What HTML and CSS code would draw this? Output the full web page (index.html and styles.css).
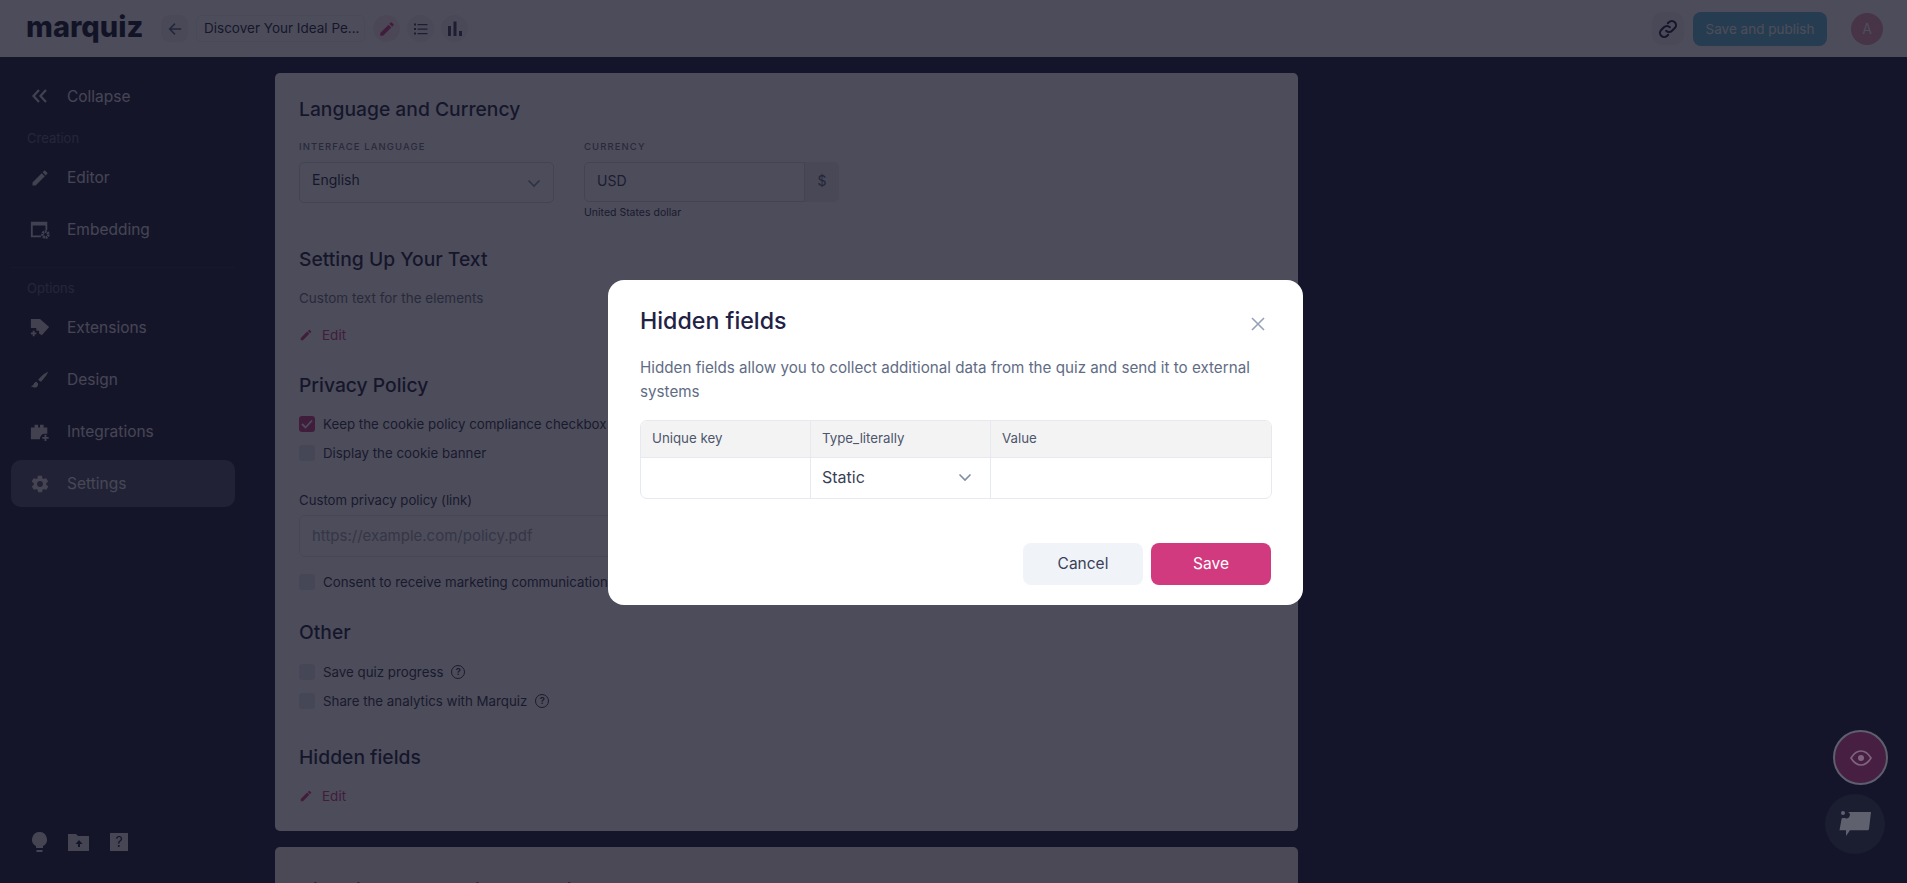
FILE: index.html
```html
<!DOCTYPE html>
<html lang="en">
<head>
    <meta charset="UTF-8">
    <title>Marquiz</title>
    <link rel="stylesheet" href="styles.css">
</head>
<body>
    <header class="topbar">
        <div class="logo">marquiz</div>
        <button class="back-btn">
            <svg width="16" height="16" viewBox="0 0 18 18"><path d="M16 9H3M9 3 3 9l6 6" fill="none" stroke="#5a6078" stroke-width="1.800"/></svg>
        </button>
        <div class="quiz-name">Discover Your Ideal Pe...</div>
        <div class="tab tab-active">
            <svg width="18" height="18" viewBox="0 0 24 24"><path d="M3 17.250V21h3.750L17.800 9.940l-3.750-3.750L3 17.250zM20.700 7.040a1 1 0 0 0 0-1.410l-2.340-2.340a1 1 0 0 0-1.410 0l-1.830 1.830 3.750 3.750 1.830-1.830z" fill="#d23a80"/></svg>
        </div>
        <div class="tab">
            <svg width="16" height="16" viewBox="0 0 16 16"><path d="M1 2.500h2v2H1zM1 7h2v2H1zM1 11.500h2v2H1zM4.500 3h10v1.200h-10zM4.500 7.500h10v1.200h-10zM4.500 12h10v1.200h-10z" fill="#3a3e58"/></svg>
        </div>
        <div class="tab">
            <svg width="16" height="16" viewBox="0 0 16 16"><path d="M1 5h3v10H1zM6.500 0.500h3V15h-3zM12 10h3v5h-3z" fill="#3a3e58"/></svg>
        </div>
        <div class="topbar-right">
            <div class="link-btn">
                <svg width="22" height="22" viewBox="0 0 24 24" fill="none" stroke="#1c1f3a" stroke-width="2.300" stroke-linecap="round"><path d="M10 14a4.500 4.500 0 0 0 6.400 0l3-3a4.500 4.500 0 0 0-6.400-6.400l-1.200 1.200"/><path d="M14 10a4.500 4.500 0 0 0-6.400 0l-3 3a4.500 4.500 0 0 0 6.400 6.400l1.200-1.200"/></svg>
            </div>
            <button class="publish-btn">Save and publish</button>
            <div class="avatar">A</div>
        </div>
    </header>

    <div class="main">
        <aside class="sidebar">
            <div class="nav-item collapse-item">
                <svg class="nav-icon" width="20" height="20" viewBox="0 0 20 20" fill="none" stroke="#fff" stroke-width="2.200"><path d="M9 4 3.500 10 9 16M16 4l-5.500 6 5.500 6"/></svg>
                <span>Collapse</span>
            </div>
            <div class="nav-title">Creation</div>
            <div class="nav-item">
                <svg class="nav-icon" width="20" height="20" viewBox="0 0 24 24"><path d="M3 17.250V21h3.750L17.800 9.940l-3.750-3.750L3 17.250zM20.700 7.040a1 1 0 0 0 0-1.410l-2.340-2.340a1 1 0 0 0-1.410 0l-1.830 1.830 3.750 3.750 1.830-1.830z" fill="#fff"/></svg>
                <span>Editor</span>
            </div>
            <div class="nav-item">
                <svg class="nav-icon" width="20" height="20" viewBox="0 0 22 22"><path d="M1 2h18v9h-2V6H3v11h9v2H1z" fill="#fff"/><circle cx="17" cy="16" r="3.200" fill="none" stroke="#fff" stroke-width="3" stroke-dasharray="2 .8"/></svg>
                <span>Embedding</span>
            </div>
            <div class="nav-divider"></div>
            <div class="nav-title">Options</div>
            <div class="nav-item">
                <svg class="nav-icon" width="20" height="20" viewBox="0 0 22 22"><path d="M1 1h10l10 9-8 9-3-2v-3H7v-3H1z" fill="#fff"/><path d="M4 14v6M1 17h6" stroke="#fff" stroke-width="2"/></svg>
                <span>Extensions</span>
            </div>
            <div class="nav-item">
                <svg class="nav-icon" width="20" height="20" viewBox="0 0 22 22"><path d="M20 2c-3 1-8 5-11 9l3 2c3-3 7-8 8-11zM7 13c-3 0-2 4-6 5 3 2 8 2 8-3z" fill="#fff"/></svg>
                <span>Design</span>
            </div>
            <div class="nav-item">
                <svg class="nav-icon" width="20" height="20" viewBox="0 0 22 22"><path d="M1 6h4V3h4v3h2V3h4v3h4v7h-3a5 5 0 0 0-5 5v1H1z" fill="#fff"/><path d="M17 14v7M13.500 17.500h7" stroke="#fff" stroke-width="2"/></svg>
                <span>Integrations</span>
            </div>
            <div class="nav-item nav-active">
                <svg class="nav-icon" width="20" height="20" viewBox="0 0 24 24"><path d="M19.400 13c.1-.3.100-.7.100-1s0-.7-.1-1l2.100-1.600c.2-.2.200-.4.100-.6l-2-3.500c-.1-.2-.4-.3-.6-.2l-2.500 1c-.5-.4-1.100-.7-1.700-1l-.4-2.700c0-.2-.2-.4-.5-.4h-4c-.3 0-.5.200-.5.400l-.4 2.700c-.6.300-1.200.6-1.700 1l-2.500-1c-.2-.1-.5 0-.6.200l-2 3.500c-.1.200-.1.400.1.600L4.600 11c-.1.300-.1.700-.1 1s0 .7.1 1l-2.100 1.600c-.2.200-.2.400-.1.600l2 3.500c.1.200.4.300.6.200l2.500-1c.5.400 1.100.7 1.700 1l.4 2.700c0 .2.200.4.500.4h4c.3 0 .5-.2.500-.4l.4-2.700c.6-.3 1.200-.6 1.700-1l2.500 1c.2.100.5 0 .6-.2l2-3.500c.1-.2.100-.4-.1-.6L19.400 13zM12 15.500a3.500 3.500 0 1 1 0-7 3.500 3.500 0 0 1 0 7z" fill="#fff"/></svg>
                <span>Settings</span>
            </div>
            <div class="sidebar-bottom">
                <svg width="15" height="20" viewBox="0 0 15 20"><path d="M7.500 0A7.500 7.500 0 0 0 4 14.100V16h7v-1.900A7.500 7.500 0 0 0 7.500 0zM4.500 18h6v2h-6z" fill="#fff"/></svg>
                <svg width="21" height="17" viewBox="0 0 21 17"><path d="M0 0h8l2 2h11v15H0zM11 6l-3.500 4H10v3h2v-3h2.500z" fill="#fff" fill-rule="evenodd"/></svg>
                <div class="help-box">?</div>
            </div>
        </aside>

        <div class="content">
            <section class="card">
                <h2 class="card-title">Language and Currency</h2>
                <div class="lang-row">
                    <div class="lang-col">
                        <div class="caps-label">INTERFACE LANGUAGE</div>
                        <div class="select-box">
                            <span>English</span>
                            <svg width="14" height="9" viewBox="0 0 14 9" fill="none" stroke="#7f8ea3" stroke-width="1.600"><path d="m1.500 1.500 5.500 5.500 5.500-5.500"/></svg>
                        </div>
                    </div>
                    <div class="lang-col">
                        <div class="caps-label">CURRENCY</div>
                        <div class="currency-box">
                            <div class="currency-input">USD</div>
                            <div class="currency-sign">$</div>
                        </div>
                        <div class="currency-hint">United States dollar</div>
                    </div>
                </div>

                <h2 class="card-title title-text">Setting Up Your Text</h2>
                <p class="muted">Custom text for the elements</p>
                <div class="edit-link">
                    <svg width="14" height="14" viewBox="0 0 24 24"><path d="M3 17.250V21h3.750L17.800 9.940l-3.750-3.750L3 17.250zM20.700 7.040a1 1 0 0 0 0-1.410l-2.340-2.340a1 1 0 0 0-1.410 0l-1.830 1.830 3.750 3.750 1.830-1.830z" fill="#d23a80"/></svg>
                    <span>Edit</span>
                </div>

                <h2 class="card-title title-privacy">Privacy Policy</h2>
                <label class="check-row">
                    <span class="check check-on"><svg width="12" height="10" viewBox="0 0 12 10" fill="none" stroke="#fff" stroke-width="1.800"><path d="m1 5 3.500 3.500L11 1.500"/></svg></span>
                    Keep the cookie policy compliance checkbox
                </label>
                <label class="check-row">
                    <span class="check"></span>
                    Display the cookie banner
                </label>
                <div class="field-label">Custom privacy policy (link)</div>
                <div class="text-field">https://example.com/policy.pdf</div>
                <label class="check-row consent-row">
                    <span class="check"></span>
                    Consent to receive marketing communications
                </label>

                <h2 class="card-title title-other">Other</h2>
                <label class="check-row">
                    <span class="check"></span>
                    Save quiz progress
                    <span class="hint-icon">?</span>
                </label>
                <label class="check-row">
                    <span class="check"></span>
                    Share the analytics with Marquiz
                    <span class="hint-icon">?</span>
                </label>

                <h2 class="card-title title-hidden">Hidden fields</h2>
                <div class="edit-link edit-hidden">
                    <svg width="14" height="14" viewBox="0 0 24 24"><path d="M3 17.250V21h3.750L17.800 9.940l-3.750-3.750L3 17.250zM20.700 7.040a1 1 0 0 0 0-1.410l-2.340-2.340a1 1 0 0 0-1.410 0l-1.830 1.830 3.750 3.750 1.830-1.830z" fill="#d23a80"/></svg>
                    <span>Edit</span>
                </div>
            </section>
            <section class="card card-next">
                <h2 class="card-title danger-title">Disabling and deleting the quiz data</h2>
            </section>
        </div>
    </div>

    <div class="overlay"></div>

    <div class="float-btns">
        <div class="eye-btn">
            <svg width="24" height="18" viewBox="0 0 24 18" fill="none" stroke="#fff" stroke-width="1.600"><path d="M2 9c3-5 6.500-7 10-7s7 2 10 7c-3 5-6.500 7-10 7S5 14 2 9z"/><circle cx="12" cy="9" r="3" fill="#fff" stroke="none"/></svg>
        </div>
        <div class="chat-btn">
            <svg width="33" height="28" viewBox="0 0 33 28"><circle cx="4" cy="3" r="2" fill="#fff"/><path d="M9 2h23l-2 17a1.500 1.500 0 0 1-1.500 1.300H11L7 26v-5.700H.5l2-11a1.500 1.500 0 0 1 1.500-1.300h2a3 3 0 0 0 3-6z" fill="#fff"/></svg>
        </div>
    </div>

    <div class="modal">
        <div class="modal-head">
            <h3 class="modal-title">Hidden fields</h3>
            <svg class="modal-close" width="16" height="16" viewBox="0 0 16 16" fill="none" stroke="#93a3b5" stroke-width="1.600"><path d="m2 2 12 12M14 2 2 14"/></svg>
        </div>
        <p class="modal-text">Hidden fields allow you to collect additional data from the quiz and send it to external systems</p>
        <div class="fields-table">
            <div class="fields-row fields-head">
                <div class="cell">Unique key</div>
                <div class="cell">Type_literally</div>
                <div class="cell">Value</div>
            </div>
            <div class="fields-row fields-body">
                <div class="cell"></div>
                <div class="cell type-cell">
                    <span>Static</span>
                    <svg width="14" height="9" viewBox="0 0 14 9" fill="none" stroke="#7f8ea3" stroke-width="1.600"><path d="m1.500 1.500 5.500 5.500 5.500-5.500"/></svg>
                </div>
                <div class="cell"></div>
            </div>
        </div>
        <div class="modal-actions">
            <button class="btn-cancel">Cancel</button>
            <button class="btn-save">Save</button>
        </div>
    </div>
</body>
</html>
```
FILE: styles.css
```css
* {
    box-sizing: border-box;
}
body {
    margin: 0;
    height: 883px;
    overflow: hidden;
    background: #181a36;
    font-family: Inter, "Liberation Sans", sans-serif;
    color: #1c1f3a;
    font-size: 14px;
}
button {
    font-family: inherit;
    border: none;
}

/* top bar */
.topbar {
    height: 57px;
    background: #fff;
    display: flex;
    align-items: center;
    padding-left: 26px;
}
.logo {
    font-weight: 800;
    font-size: 29px;
    width: 135px;
    margin-top: -4px;
    color: #12142a;
}
.back-btn {
    width: 27px;
    height: 27px;
    border-radius: 8px;
    background: #f1f3f7;
    display: flex;
    align-items: center;
    justify-content: center;
    padding: 0;
    margin-right: 8px;
}
.quiz-name {
    width: 169px;
    height: 27px;
    line-height: 25px;
    padding-left: 7px;
    border: 1px solid #f1f3f7;
    border-radius: 5px;
    font-size: 13.500px;
    white-space: nowrap;
    margin-right: 8px;
}
.tab {
    width: 27px;
    height: 27px;
    border-radius: 50%;
    background: #f1f3f7;
    display: flex;
    align-items: center;
    justify-content: center;
    margin-right: 7px;
}
.tab-active {
    background: #fbe9f1;
}
.topbar-right {
    margin-left: auto;
    display: flex;
    align-items: center;
    padding-right: 24px;
}
.link-btn {
    width: 32px;
    height: 33px;
    border-radius: 10px;
    background: #f1f3f7;
    display: flex;
    align-items: center;
    justify-content: center;
    margin-right: 9px;
}
.publish-btn {
    width: 134px;
    height: 34px;
    border-radius: 8px;
    background: #62bdd6;
    color: #fff;
    font-size: 13.500px;
    margin-right: 24px;
    padding: 0;
}
.avatar {
    width: 32px;
    height: 32px;
    border-radius: 50%;
    background: #e89aae;
    color: #fff;
    display: flex;
    align-items: center;
    justify-content: center;
    font-size: 14px;
}

/* layout */
.main {
    display: flex;
    height: 826px;
    overflow: hidden;
}
.sidebar {
    width: 250px;
    background: #1a1c36;
    padding: 17px 15px 0 11px;
    display: flex;
    flex-direction: column;
    flex-shrink: 0;
    color: rgba(255, 255, 255, 0.88);
}
.nav-item {
    height: 47px;
    display: flex;
    align-items: center;
    padding-left: 19px;
    font-size: 15.500px;
    border-radius: 10px;
    margin-bottom: 5px;
}
.nav-item span {
    margin-left: 17px;
}
.nav-icon {
    flex-shrink: 0;
    opacity: 0.8;
}
.collapse-item {
    height: 44px;
    margin-bottom: 0;
}
.nav-title {
    font-size: 13px;
    line-height: 20px;
    padding-left: 16px;
    color: #5d6070;
    margin-top: 10px;
    margin-bottom: 6px;
}
.nav-divider {
    height: 1px;
    margin: 9px 0 0;
    background: #24264a;
}
.nav-active {
    background: #4e5068;
}
.sidebar-bottom {
    margin-top: auto;
    margin-bottom: 31px;
    display: flex;
    align-items: center;
    gap: 21px;
    padding-left: 21px;
}
.sidebar-bottom svg {
    opacity: 0.85;
}
.help-box {
    width: 18px;
    height: 18px;
    background: #e6e7ea;
    color: #12142a;
    text-align: center;
    line-height: 18px;
    font-size: 14px;
}

/* settings cards */
.content {
    width: 1023px;
    margin-left: 25px;
    padding-top: 16px;
}
.card {
    background: #fff;
    border-radius: 5px;
    padding: 22px 24px 0;
    height: 758px;
}
.card-next {
    margin-top: 16px;
    height: 36px;
    padding-top: 29px;
    overflow: hidden;
    border-radius: 5px 5px 0 0;
    background: #fff2f2;
}
.card-title {
    margin: 0;
    font-size: 19.300px;
    line-height: 28px;
    font-weight: 500;
}
.danger-title {
    color: #d22b45;
}
.lang-row {
    display: flex;
    gap: 30px;
    margin-top: 18px;
}
.lang-col {
    width: 255px;
}
.caps-label {
    font-size: 9.500px;
    letter-spacing: 1.100px;
    line-height: 12px;
    color: #6b7080;
    font-weight: 500;
    margin-bottom: 9px;
}
.select-box {
    height: 41px;
    border: 1px solid #d6d9e0;
    border-radius: 5px;
    display: flex;
    align-items: center;
    justify-content: space-between;
    padding: 0 12px 6px;
    font-size: 14px;
}
.select-box svg {
    margin-top: 8px;
}
.currency-box {
    display: flex;
    height: 40px;
}
.currency-input {
    flex: 1;
    border: 1px solid #d6d9e0;
    border-radius: 5px 0 0 5px;
    padding-left: 12px;
    line-height: 36px;
    color: #3a3d55;
}
.currency-sign {
    width: 34px;
    background: #eceef2;
    border-radius: 0 5px 5px 0;
    text-align: center;
    line-height: 38px;
    color: #5b6075;
}
.currency-hint {
    font-size: 10.500px;
    line-height: 14px;
    margin-top: 4px;
    color: #2e3148;
}
.title-text {
    margin-top: 25px;
}
.muted {
    margin: 15px 0 0;
    font-size: 13.500px;
    line-height: 20px;
    color: #6b7080;
}
.edit-link {
    display: flex;
    align-items: center;
    gap: 9px;
    margin-top: 17px;
    font-size: 13.500px;
    color: #d23a80;
    height: 20px;
}
.edit-hidden {
    margin-top: 15px;
}
.title-privacy {
    margin-top: 26px;
}
.check-row {
    display: flex;
    align-items: center;
    gap: 8px;
    height: 29px;
    font-size: 13.300px;
    color: #2e3148;
    white-space: nowrap;
}
.title-privacy + .check-row {
    margin-top: 10px;
}
.check {
    width: 16px;
    height: 16px;
    border-radius: 3px;
    background: #e6e9ef;
    display: flex;
    align-items: center;
    justify-content: center;
    flex-shrink: 0;
}
.check-on {
    background: #d23a80;
}
.hint-icon {
    width: 14px;
    height: 14px;
    border: 1.500px solid #2e3148;
    border-radius: 50%;
    font-size: 9.500px;
    font-weight: 600;
    text-align: center;
    line-height: 11px;
}
.field-label {
    margin-top: 23px;
    font-size: 13.200px;
    line-height: 20px;
    color: #2e3148;
}
.text-field {
    margin-top: 5px;
    height: 42px;
    width: 600px;
    border: 1px solid #e6e9ef;
    border-radius: 6px;
    padding-left: 12px;
    line-height: 40px;
    font-size: 15px;
    color: #9ea3b0;
}
.consent-row {
    margin-top: 10px;
}
.title-other {
    margin-top: 22px;
}
.title-other + .check-row {
    margin-top: 11px;
}
.title-hidden {
    margin-top: 28px;
}

/* dark layer under the dialog */
.overlay {
    position: fixed;
    top: 0;
    left: 0;
    right: 0;
    bottom: 0;
    background: rgba(20, 20, 38, 0.76);
}

/* bottom right buttons */
.float-btns {
    position: fixed;
    right: 19px;
    bottom: 29px;
    display: flex;
    flex-direction: column;
    align-items: flex-end;
    gap: 9px;
}
.eye-btn {
    width: 55px;
    height: 55px;
    border-radius: 50%;
    background: #471f43;
    border: 2px solid #5e5f6c;
    display: flex;
    align-items: center;
    justify-content: center;
}
.eye-btn svg,
.chat-btn svg {
    opacity: 0.3;
}
.chat-btn {
    width: 60px;
    height: 60px;
    margin-right: 3px;
    border-radius: 50%;
    background: #1b1d31;
    display: flex;
    align-items: center;
    justify-content: center;
}

/* dialog */
.modal {
    position: fixed;
    left: 608px;
    top: 280px;
    width: 695px;
    height: 325px;
    background: #fff;
    border-radius: 16px;
    padding: 25px 32px 0;
}
.modal-head {
    display: flex;
    justify-content: space-between;
    align-items: flex-start;
}
.modal-title {
    margin: 0;
    font-size: 23.200px;
    line-height: 32px;
    font-weight: 500;
    color: #1f2245;
}
.modal-close {
    margin-top: 11px;
    margin-right: 5px;
}
.modal-text {
    margin: 19px 0 0;
    font-size: 15.200px;
    line-height: 24px;
    color: #5f6c85;
}
.fields-table {
    margin-top: 16px;
    border: 1px solid #e6e9ef;
    border-radius: 7px;
    overflow: hidden;
    width: 632px;
}
.fields-row {
    display: grid;
    grid-template-columns: 170px 180px 1fr;
}
.fields-head {
    height: 37px;
    background: #f3f3f4;
    border-bottom: 1px solid #e6e9ef;
    font-size: 13.300px;
    color: #4d566b;
}
.fields-body {
    height: 40px;
}
.cell {
    border-right: 1px solid #e6e9ef;
    padding-left: 11px;
    padding-bottom: 2px;
    display: flex;
    align-items: center;
}
.cell:last-child {
    border-right: none;
}
.type-cell {
    justify-content: space-between;
    padding-right: 18px;
    font-size: 16px;
    color: #3a3f57;
}
.modal-actions {
    display: flex;
    justify-content: flex-end;
    gap: 8px;
    margin-top: 44px;
}
.btn-cancel,
.btn-save {
    width: 120px;
    height: 42px;
    border-radius: 8px;
    font-size: 15.500px;
    padding: 0 0 2px;
}
.btn-cancel {
    background: #f0f3f7;
    color: #3a3f57;
}
.btn-save {
    background: #d23a80;
    color: #fff;
}
```
